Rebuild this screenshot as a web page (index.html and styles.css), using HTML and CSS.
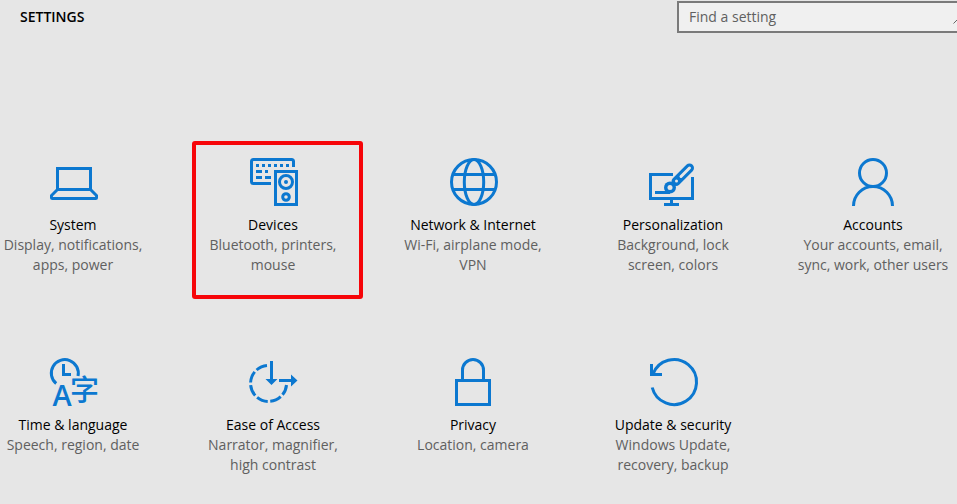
FILE: index.html
```html
<!DOCTYPE html>
<html lang="en">
  <head>
    <meta charset="UTF-8" />
    <meta name="viewport" content="width=device-width, initial-scale=1.0" />
    <title>Settings</title>
    <link rel="stylesheet" href="styles.css">
  </head>
  <body>
    <header class="header">
      <h1>SETTINGS</h1>
      <form class="search" role="search">
        <input type="text" id="search" placeholder="Find a setting" aria-label="Find a setting" />
        <svg class="search-icon" viewBox="0 0 16 16" aria-hidden="true">
          <circle cx="10" cy="6" r="5" />
          <path d="M6.500 9.500L.5 15.500" />
        </svg>
      </form>
    </header>

    <main class="settings">
      <a class="tile" href="#system">
        <svg class="icon" viewBox="-1 0 48 48">
          <rect x="7.500" y="10.500" width="33" height="21" />
          <path d="M7.500 31.500L1.500 37.500V39.500Q1.500 40.500 2.500 40.500H45.500Q46.500 40.500 46.500 39.500V37.500L40.500 31.500" />
        </svg>
        <h2>System</h2>
        <p>Display, notifications,<br />apps, power</p>
      </a>

      <a class="tile selected" href="#devices">
        <svg class="icon" viewBox="-1 0 48 48">
          <path d="M21 25.500H3.500Q1.500 25.500 1.500 23.500V3.500Q1.500 1.500 3.500 1.500H41.500Q43.500 1.500 43.500 3.500V9" />
          <path d="M6 7.500H39" stroke-dasharray="3 3" />
          <path d="M6 13.500H12M15 13.500H18M6 19.500H12M15 19.500H21" />
          <rect x="25.500" y="13.500" width="21" height="33" />
          <circle cx="36" cy="24" r="6.500" />
          <circle class="solid" cx="36" cy="24" r="2" />
          <circle cx="36" cy="39" r="3.300" />
        </svg>
        <h2>Devices</h2>
        <p>Bluetooth, printers,<br />mouse</p>
      </a>

      <a class="tile" href="#network">
        <svg class="icon" viewBox="-1 0 48 48">
          <circle cx="24" cy="24" r="22.500" />
          <ellipse cx="24" cy="24" rx="9.700" ry="22.500" />
          <path d="M3 16.500H45M3 31.500H45" />
        </svg>
        <h2>Network &amp; Internet</h2>
        <p>Wi-Fi, airplane mode,<br />VPN</p>
      </a>

      <a class="tile" href="#personalization">
        <svg class="icon" viewBox="-1 0 48 48">
          <path d="M23 16.500H.5V40.500H42.500V19" />
          <path d="M21.500 41V46.500M14 46.500H29" />
          <path d="M5 34.500H20" />
          <path class="brush" d="M26 23.500L39.500 10" />
          <path class="brush-gap" d="M31 18.500L39.500 10" />
          <circle class="solid" cx="20" cy="29.500" r="6" />
          <circle class="gap" cx="20" cy="29.500" r="2.500" />
          <circle class="gap" cx="26.500" cy="23" r="1.500" />
        </svg>
        <h2>Personalization</h2>
        <p>Background, lock<br />screen, colors</p>
      </a>

      <a class="tile" href="#accounts">
        <svg class="icon" viewBox="-1 0 48 48">
          <circle cx="23" cy="15" r="13.500" />
          <path d="M3.500 48A19.500 19.500 0 0 1 42.500 48" />
        </svg>
        <h2>Accounts</h2>
        <p>Your accounts, email,<br />sync, work, other users</p>
      </a>

      <a class="tile" href="#time">
        <svg class="icon" viewBox="-1 0 48 48">
          <path d="M6.200 25.500A13.500 13.500 0 1 1 28 18" />
          <path d="M13.500 6V16.500H21" />
          <text class="latin" x="12" y="48">A</text>
          <text class="cjk" x="34.500" y="43">字</text>
        </svg>
        <h2>Time &amp; language</h2>
        <p>Speech, region, date</p>
      </a>

      <a class="tile" href="#ease">
        <svg class="icon" viewBox="-1 0 48 48">
          <path d="M17 7.500A18 18 0 1 0 36.500 27" stroke-dasharray="11.500 2.600" />
          <path d="M21.500 3V22M29 22.500H42" />
          <path class="solid" d="M15.500 21H27.500L21.500 27ZM41 16.500L47.500 22.500L41 28.500Z" />
        </svg>
        <h2>Ease of Access</h2>
        <p>Narrator, magnifier,<br />high contrast</p>
      </a>

      <a class="tile" href="#privacy">
        <svg class="icon" viewBox="-1 0 48 48">
          <rect x="6.500" y="22.500" width="33" height="24" />
          <path d="M12.500 22V12A10.500 10.500 0 0 1 33.500 12V22" />
        </svg>
        <h2>Privacy</h2>
        <p>Location, camera</p>
      </a>

      <a class="tile" href="#update">
        <svg class="icon" viewBox="-1 0 48 48">
          <path d="M2.200 29.500A22.500 22.500 0 1 0 3 16" />
          <path d="M1.500 6V16.500H12" />
        </svg>
        <h2>Update &amp; security</h2>
        <p>Windows Update,<br />recovery, backup</p>
      </a>
    </main>
  </body>
</html>
```
FILE: styles.css
```css
body {
  margin: 0;
  background: #e6e6e6;
  color: #000;
  font-family: "Open Sans", "Noto Sans", sans-serif;
  font-size: 14px;
  line-height: 20px;
  overflow: hidden;
}
.header {
  display: flex;
  justify-content: space-between;
  align-items: flex-start;
  padding: 1px 0 0 20px;
}
h1 {
  margin: 6px 0 0;
  font-size: 14px;
  font-weight: 600;
}
/* the search box and the grid run past the right edge */
.search {
  position: relative;
  width: 296px;
  margin-right: -16px;
}
.search input {
  box-sizing: border-box;
  width: 100%;
  height: 32px;
  display: block;
  padding: 0 32px 2px 10px;
  border: 2px solid #7a7a7a;
  border-radius: 0;
  background: #f0f0f0;
  font: inherit;
}
.search input::placeholder {
  color: #606060;
  opacity: 1;
}
.search-icon {
  position: absolute;
  top: 7px;
  right: 4px;
  width: 16px;
  height: 16px;
  fill: none;
  stroke: #666;
}
.settings {
  display: grid;
  grid-template-columns: repeat(5, minmax(0, 1fr));
  grid-template-rows: 200px auto;
  margin: 105px -16px 0 -27px;
}
.tile {
  position: relative;
  display: flex;
  flex-direction: column;
  align-items: center;
  padding-top: 20px;
  color: inherit;
  text-align: center;
  text-decoration: none;
}
.tile.selected::before {
  content: "";
  position: absolute;
  top: 3px;
  bottom: 39px;
  left: 19px;
  right: 10px;
  border: 4px solid #f60509;
  border-radius: 3px;
}
.icon {
  width: 48px;
  height: 48px;
  margin-bottom: 9px;
  overflow: visible;
  fill: none;
  stroke: #0c78d0;
  stroke-width: 3;
}
.icon .solid {
  fill: #0c78d0;
  stroke: none;
}
.icon .gap {
  fill: #e6e6e6;
  stroke: none;
}
.icon .brush {
  stroke-width: 9;
  stroke-linecap: round;
}
.icon .brush-gap {
  stroke: #e6e6e6;
  stroke-width: 3;
  stroke-linecap: round;
}
.icon text {
  fill: #0c78d0;
  stroke: none;
  text-anchor: middle;
}
.icon .latin {
  font-size: 29px;
  font-weight: 600;
}
.icon .cjk {
  font-family: "Noto Sans CJK SC", sans-serif;
  font-size: 29px;
  font-weight: 500;
}
h2 {
  margin: 0;
  font-size: 14px;
  font-weight: 400;
}
p {
  margin: 0;
  color: #606060;
}
```
